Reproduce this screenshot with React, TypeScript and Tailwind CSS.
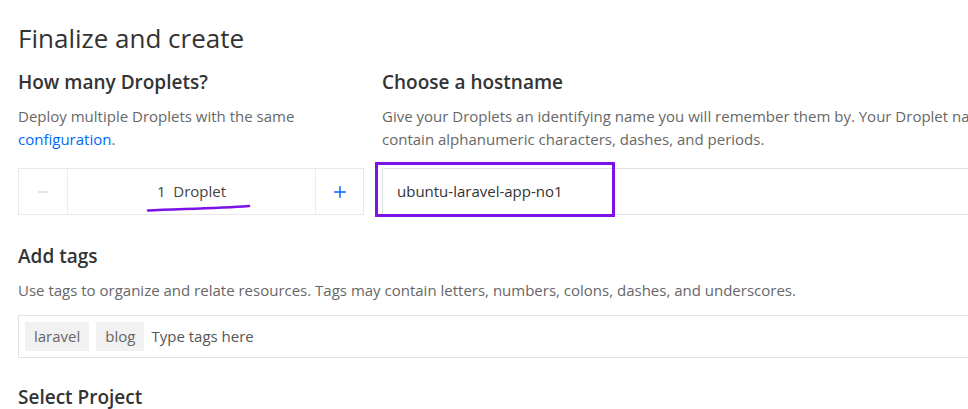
import { Minus, Plus } from "lucide-react";

const font = { fontFamily: "'Open Sans', 'Liberation Sans', sans-serif" };

function Stepper() {
  return (
    <div className="flex h-[47px] w-[346px] border border-[#e8e8e8] bg-white">
      <button type="button" className="flex w-[49px] items-center justify-center border-r border-[#ececec]">
        <Minus className="h-[16px] w-[16px] text-[#c9c9c9]" strokeWidth={1.5} />
      </button>
      <div className="flex flex-1 items-center justify-center text-[15px] text-[#444]">1&nbsp;&nbsp;Droplet</div>
      <button type="button" className="flex w-[48px] items-center justify-center border-l border-[#ececec]">
        <Plus className="h-[18px] w-[18px] text-[#0069ff]" strokeWidth={2} />
      </button>
    </div>
  );
}

export default function App() {
  return (
    <div className="relative h-[409px] w-[968px] overflow-hidden bg-white pl-[18px]" style={font}>
      <h1 className="pt-[22px] text-[26px] leading-[32px] text-[#333]">Finalize and create</h1>

      <div className="mt-[16px] flex">
        {/* Droplet count */}
        <section className="w-[346px] shrink-0">
          <h2 className="text-[19px] font-semibold leading-[24px] text-[#333]">How many Droplets?</h2>
          <p className="mt-[11px] text-[15px] leading-[23px] text-[#676767]">
            Deploy multiple Droplets with the same
            <br />
            <a href="#" className="text-[#0069ff]">configuration</a>.
          </p>
          <div className="mt-[17px]">
            <Stepper />
          </div>
        </section>

        {/* Hostname */}
        <section className="ml-[18px] w-[800px] shrink-0">
          <h2 className="text-[19px] font-semibold leading-[24px] text-[#333]">Choose a hostname</h2>
          <p className="mt-[11px] whitespace-nowrap text-[15px] leading-[23px] text-[#676767]">
            Give your Droplets an identifying name you will remember them by. Your Droplet name can only
            <br />
            contain alphanumeric characters, dashes, and periods.
          </p>
          <div className="mt-[17px] flex h-[47px] items-center border border-[#e3e3e3] px-[14px] text-[15px] text-[#333]">
            ubuntu-laravel-app-no1
          </div>
        </section>
      </div>

      {/* Tags */}
      <section className="mt-[29px]">
        <h2 className="text-[19px] font-semibold leading-[24px] text-[#333]">Add tags</h2>
        <p className="mt-[11px] text-[15px] leading-[23px] text-[#676767]">
          Use tags to organize and relate resources. Tags may contain letters, numbers, colons, dashes, and underscores.
        </p>
        <div className="mt-[13px] flex h-[43px] w-[1000px] items-center gap-[7px] border border-[#e3e3e3] px-[6px]">
          <span className="flex h-[29px] items-center bg-[#f1f1f1] px-[9px] text-[15px] text-[#666]">laravel</span>
          <span className="flex h-[29px] items-center bg-[#f1f1f1] px-[9px] text-[15px] text-[#666]">blog</span>
          <span className="text-[15px] text-[#555]">Type tags here</span>
        </div>
      </section>

      <h2 className="mt-[27px] text-[19px] font-semibold leading-[24px] text-[#333]">Select Project</h2>

      {/* annotation marks */}
      <div className="absolute left-[375px] top-[162px] h-[55px] w-[240px] border-[3px] border-[#7c12e8]" />
      <svg className="absolute left-[146px] top-[202px]" width="106" height="12" viewBox="0 0 106 12">
        <path d="M2 8.5 C 30 7, 70 6.5, 103 4" stroke="#7c12e8" strokeWidth="2.6" fill="none" strokeLinecap="round" />
      </svg>
    </div>
  );
}
